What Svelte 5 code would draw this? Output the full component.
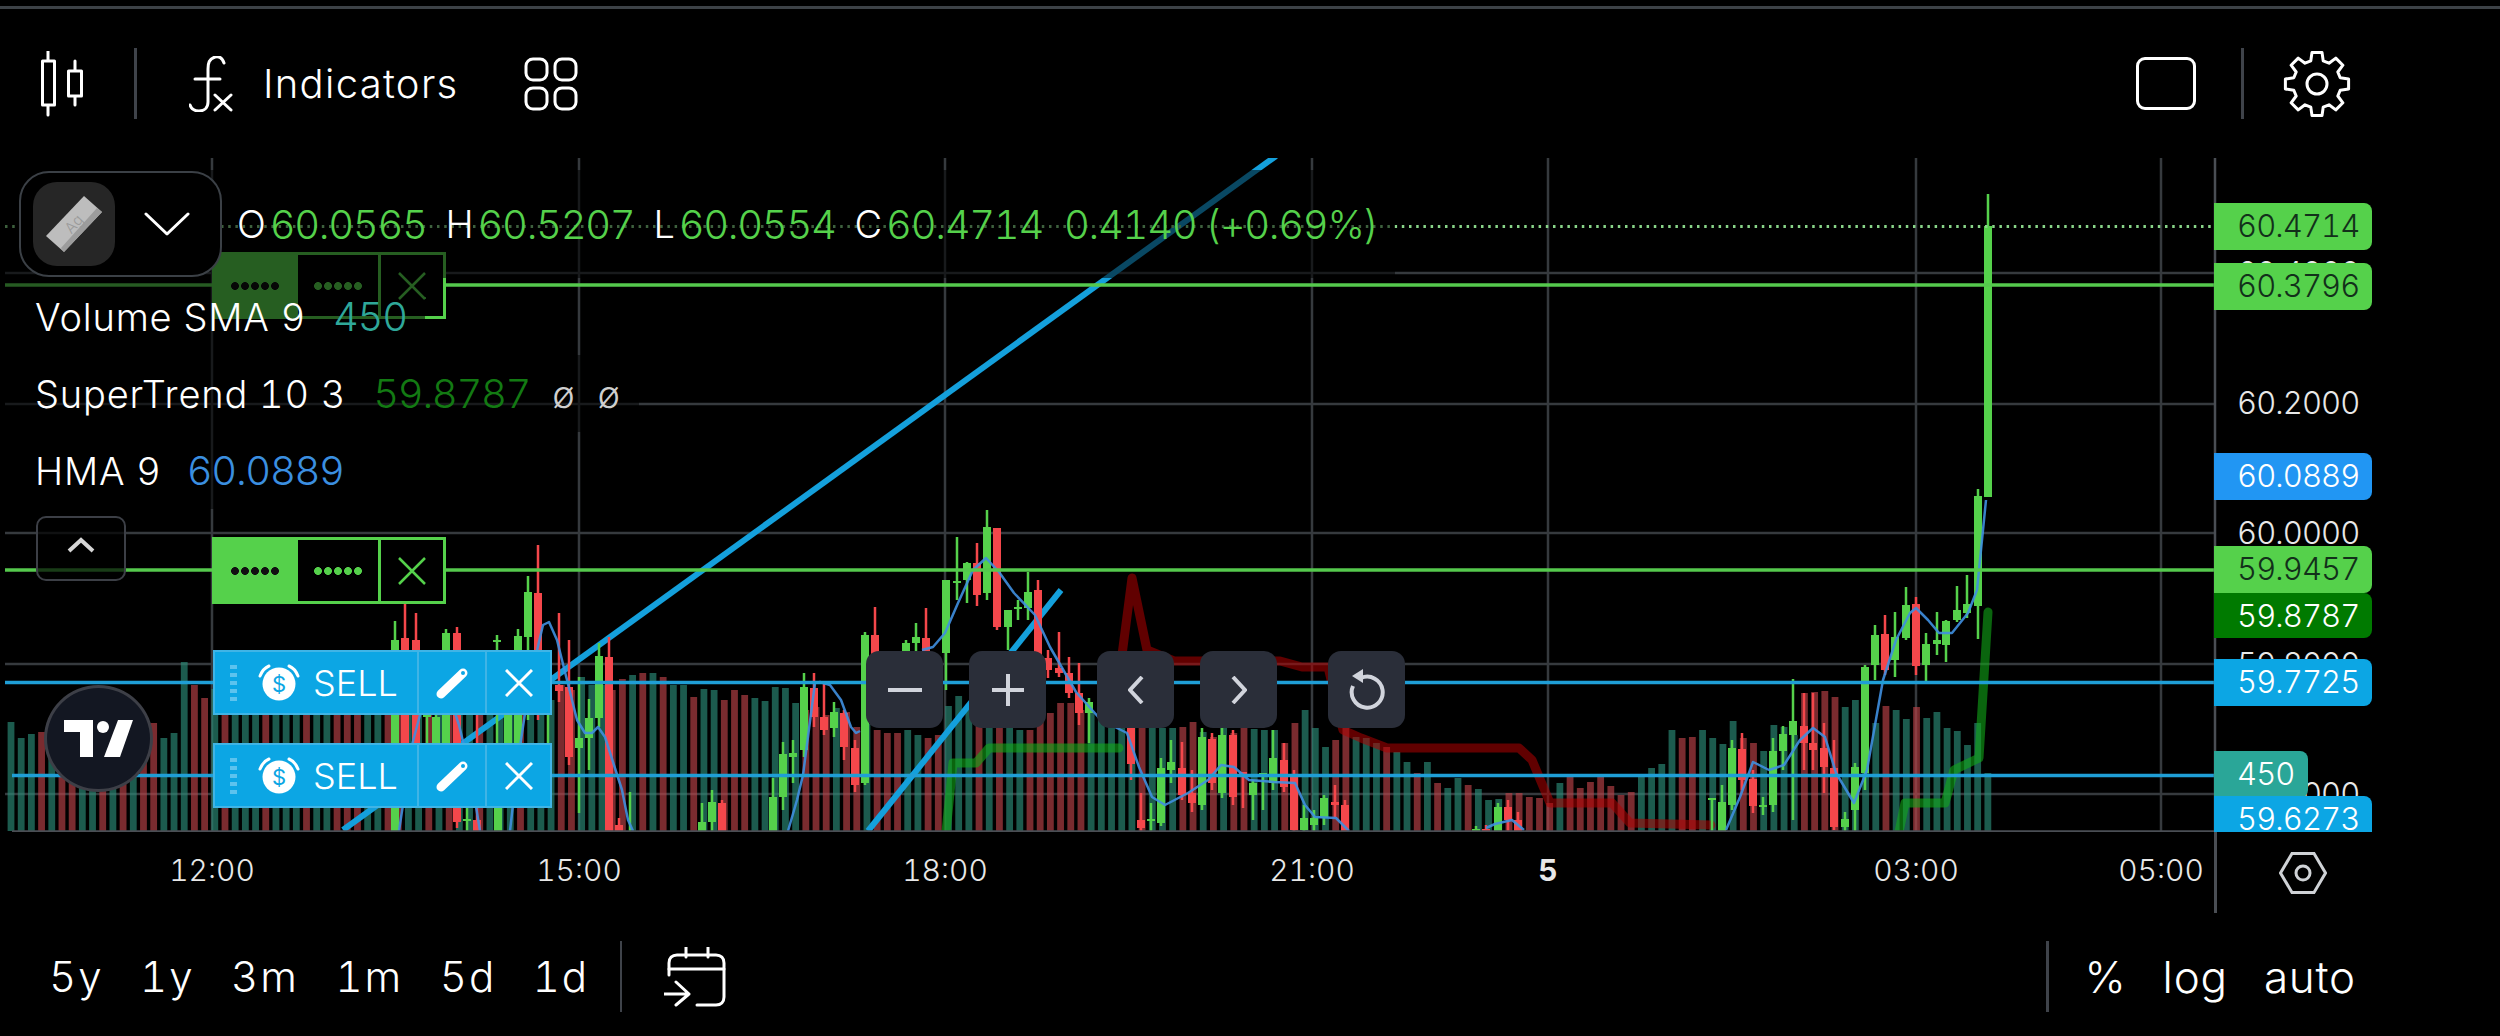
<script>
  // all chart coordinates are page pixels, the svg viewBox starts at y=158
  const gridX = [212, 579, 945, 1312, 1548, 1916, 2161];
  const gridY = [273, 404, 533, 664, 794];

  // volume bars left to right: bar top, negative means a red bar
  const volumes = [
    722, 738, 734, -732, 730, -725, -735, 722, 735, -735, 730, -720, 725, -730, -723, 738, 733, 662, -685, -698, 689,
    -700, 695, 700, 702, -690, 705, 695, 700, -695, 700, 698, -690, -705, -700, 695, 700, -700, -695, 690, 705,
    -700, 695, -692, 700, 690, -695, 700, 705, 695, -700, 698, 690, 700,
    -685, -690, 677, 685, 685, -690, -679, 675, -673, 673, -677, 685, 685, -697, 689, 690, -700, -690, -695, 698, 701, 687, 688, 703,
    -710, -707, -715, 708, -712, -727, 724, -730, -733, -733, 730, 735, -738, -735, 706, 696, 710, -713, 720, -720, 727, 730,
    -730, -717, -713, -703, -703, -710, 713, 720, 727, 727, 727, -723, 728, 728, 728, -727, -722, 732, -737, 728, -733, -728,
    729, 730, 730, -743, -723, 710, 728, 747, -740, -728, 737, 738, 743, -747, 752, 762, -773, 762, -783, 788, 778, -785,
    789, 800, 799, -793, -793, -797, -798, -803, 783, -777, -788, -782, -777, -786, -795, -792, 775, 768, 764, 730, -738, -737,
    730, 738, 744, 721, -738, -743, 751, 725, 727, 735, -693, -692, -691, -697, 707, 700, 715, 723, -706, 710, 719, -707,
    718, 712, 728, 731, 745, 723, 773,
  ];
  const bars = volumes.map((v, i) => ({ x: 11 + i * 10.19, top: Math.abs(v), red: v < 0 }));

  // candles: x, high, body top, body bottom, low, green?
  const candles = [
    [395, 621, 640, 831, 831, 1], [405, 603, 638, 743, 760, 0], [416, 613, 640, 743, 760, 0], [427, 690, 715, 715, 745, 1],
    [436, 690, 717, 745, 745, 1], [446, 629, 633, 745, 750, 1], [457, 627, 633, 822, 828, 0], [467, 800, 819, 821, 831, 1],
    [477, 700, 820, 831, 831, 0], [497, 635, 640, 640, 745, 1], [498, 808, 808, 831, 831, 1], [508, 690, 715, 745, 745, 1],
    [518, 629, 636, 745, 745, 1], [528, 576, 592, 637, 720, 1], [538, 545, 593, 650, 720, 0], [548, 700, 700, 700, 745, 1],
    [559, 613, 685, 691, 702, 0], [569, 640, 687, 757, 765, 0], [579, 677, 738, 748, 813, 1], [589, 699, 718, 738, 770, 1],
    [599, 643, 656, 718, 727, 1], [609, 637, 657, 831, 831, 0], [619, 818, 825, 831, 831, 0], [630, 792, 831, 831, 831, 1],
    [702, 803, 822, 831, 831, 1], [712, 790, 802, 822, 831, 1], [722, 800, 803, 831, 831, 0], [773, 778, 797, 831, 831, 1],
    [783, 742, 754, 797, 810, 1], [793, 740, 753, 757, 783, 1], [804, 673, 687, 750, 757, 1], [814, 673, 688, 717, 727, 0],
    [824, 683, 717, 730, 735, 0], [834, 702, 712, 728, 737, 1], [844, 710, 713, 747, 760, 0], [855, 740, 748, 785, 792, 0],
    [865, 632, 635, 783, 785, 1], [875, 607, 635, 665, 670, 0], [906, 640, 643, 651, 660, 1], [916, 623, 637, 643, 655, 1],
    [926, 608, 638, 651, 660, 0], [946, 580, 580, 653, 690, 1], [957, 537, 581, 583, 600, 1], [967, 562, 563, 580, 603, 1],
    [977, 543, 563, 595, 606, 0], [987, 510, 527, 593, 600, 1], [997, 528, 528, 627, 630, 0], [1008, 610, 610, 627, 650, 1],
    [1018, 600, 607, 609, 620, 1], [1028, 572, 592, 608, 620, 1], [1038, 580, 590, 660, 665, 0], [1048, 650, 658, 670, 678, 0],
    [1059, 632, 668, 673, 677, 0], [1069, 657, 673, 693, 698, 0], [1079, 663, 693, 713, 725, 0], [1089, 698, 702, 713, 743, 1],
    [1131, 725, 728, 764, 780, 0], [1141, 793, 820, 828, 831, 0], [1151, 803, 819, 821, 831, 1], [1161, 758, 768, 823, 826, 1],
    [1171, 740, 762, 770, 783, 1], [1182, 742, 768, 795, 800, 0], [1192, 770, 793, 803, 812, 0], [1202, 728, 737, 805, 810, 1],
    [1212, 733, 739, 783, 790, 0], [1222, 727, 735, 793, 798, 1], [1233, 730, 735, 797, 805, 0], [1243, 772, 772, 772, 808, 0],
    [1253, 780, 783, 795, 820, 1], [1263, 773, 773, 773, 810, 1], [1273, 730, 758, 783, 790, 1], [1284, 743, 760, 787, 792, 0],
    [1294, 770, 777, 830, 831, 0], [1304, 805, 818, 830, 831, 1], [1314, 810, 818, 825, 831, 1], [1324, 795, 798, 818, 825, 1],
    [1335, 785, 802, 805, 817, 0], [1345, 800, 805, 831, 831, 0], [1476, 826, 829, 831, 831, 1], [1486, 825, 829, 831, 831, 0],
    [1498, 803, 807, 831, 831, 1], [1508, 800, 807, 820, 831, 0], [1518, 812, 820, 831, 831, 0], [1712, 798, 798, 798, 831, 1],
    [1722, 785, 802, 831, 831, 1], [1732, 740, 748, 805, 810, 1], [1742, 733, 749, 780, 790, 0], [1753, 770, 779, 806, 813, 0],
    [1763, 797, 805, 807, 815, 1], [1773, 738, 751, 805, 812, 1], [1783, 726, 734, 751, 770, 1], [1793, 679, 721, 735, 820, 1],
    [1804, 693, 726, 743, 770, 0], [1813, 693, 743, 750, 770, 0], [1824, 723, 748, 767, 793, 0], [1834, 740, 768, 827, 830, 0],
    [1845, 812, 819, 827, 831, 1], [1855, 763, 767, 810, 831, 1], [1865, 665, 667, 773, 790, 1], [1875, 625, 635, 665, 680, 1],
    [1885, 615, 634, 670, 675, 0], [1895, 612, 637, 660, 677, 1], [1906, 587, 605, 638, 640, 1], [1916, 597, 604, 666, 675, 0],
    [1926, 633, 644, 665, 682, 1], [1937, 612, 640, 644, 655, 1], [1946, 620, 621, 645, 662, 1], [1957, 586, 610, 620, 622, 1],
    [1967, 575, 604, 613, 618, 1], [1978, 489, 496, 606, 639, 1], [1988, 194, 226, 497, 497, 1],
  ];

  const hma = [
    "399,831 412,745 424,700 436,682 449,695 459,725 470,770 480,831",
    "510,831 518,760 530,680 543,625 549,622 557,640 567,680 577,720 585,733 592,733 598,727 605,737 613,762 622,790 628,820 633,831",
    "788,831 797,800 803,775 815,683 820,682 830,685 841,700 851,727 856,733 860,731",
    "922,650 933,647 945,633 958,603 973,570 986,558 999,572 1014,593 1035,615 1050,647 1076,692 1101,720 1127,733 1139,767 1152,797 1165,805 1188,793 1208,780 1221,765 1234,767 1249,780 1274,782 1295,783 1305,805 1315,817 1336,818 1349,831",
    "1486,828 1495,824 1512,820 1524,830",
    "1726,830 1740,797 1753,762 1769,770 1784,765 1800,740 1813,728 1825,737 1836,773 1854,803 1867,770 1883,680 1896,640 1910,613 1916,608 1928,620 1939,633 1952,633 1968,613 1977,590 1986,500",
  ];

  const priceTicks = [
    { y: 273, t: "60.4000" },
    { y: 403, t: "60.2000" },
    { y: 533, t: "60.0000" },
    { y: 664, t: "59.8000" },
    { y: 794, t: "59.6000" },
  ];
  const priceTags = [
    { top: 203, t: "60.4714", c: "green" },
    { top: 263, t: "60.3796", c: "green" },
    { top: 453, t: "60.0889", c: "blue" },
    { top: 593, t: "59.8787", c: "trend" },
    { top: 546, t: "59.9457", c: "green" },
    { top: 659, t: "59.7725", c: "sky" },
    { top: 751, t: "450", c: "vol" },
    { top: 796, t: "59.6273", c: "sky" },
  ];

  const times = [
    { x: 212, t: "12:00" },
    { x: 579, t: "15:00" },
    { x: 945, t: "18:00" },
    { x: 1312, t: "21:00" },
    { x: 1548, t: "5", bold: true },
    { x: 1916, t: "03:00" },
    { x: 2161, t: "05:00" },
  ];
  const ranges = ["5y", "1y", "3m", "1m", "5d", "1d"];

  function gearPath(cx, cy, outer, root) {
    const pts = [];
    for (let i = 0; i < 8; i++) {
      const a = -90 + i * 45;
      for (const [d, r] of [[-15, root], [-9, outer], [9, outer], [15, root]]) {
        const rad = ((a + d) * Math.PI) / 180;
        pts.push((cx + r * Math.cos(rad)).toFixed(1) + " " + (cy + r * Math.sin(rad)).toFixed(1));
      }
    }
    return "M" + pts.join("L") + "Z";
  }
</script>

<main class="page">
  <div class="top-rule"></div>

  <header class="toolbar">
    <svg class="ico candles-ico" viewBox="0 0 44 66" width="44" height="66">
      <path d="M7 0V10M7 54V64M34 10V54" />
      <rect x="1.5" y="10" width="12" height="44" fill="#000" />
      <rect x="27.5" y="20" width="13" height="25" fill="#000" />
    </svg>
    <span class="tb-divider"></span>
    <svg class="ico fx-ico" viewBox="0 0 44 56" width="44" height="56">
      <path d="M35 7C33 1 29 0 26 1C20 3 19 7 19 13V46C19 52 15 55 10 55C5 55 2 52 1 49" />
      <path d="M6 23H31" />
      <path d="M26 39L42 54M42 39L26 54" />
    </svg>
    <span class="tb-label">Indicators</span>
    <svg class="ico grid-ico" viewBox="0 0 54 54" width="54" height="54">
      <rect x="2" y="2" width="21" height="21" rx="7" />
      <rect x="31" y="2" width="21" height="21" rx="7" />
      <rect x="2" y="31" width="21" height="21" rx="7" />
      <rect x="31" y="31" width="21" height="21" rx="7" />
    </svg>
    <span class="spacer"></span>
    <span class="square-btn"></span>
    <span class="tb-divider right-divider"></span>
    <svg class="ico gear-ico" viewBox="0 0 68 68" width="68" height="68">
      <path d={gearPath(34, 34, 32, 24)} />
      <circle cx="34" cy="34" r="10" />
    </svg>
  </header>

  <section class="chart">
    <svg class="plot" viewBox="0 158 2500 674" width="2500" height="674">
      {#each gridX as x}
        <line class="grid" x1={x} x2={x} y1="158" y2="832" />
      {/each}
      {#each gridY as y}
        <line class="grid" x1="5" x2="2215" y1={y} y2={y} />
      {/each}

      {#each bars as b}
        <rect class={b.red ? "vol-red" : "vol-green"} x={b.x - 3.4} y={b.top} width="6.8" height={831 - b.top} />
      {/each}

      <polyline class="trend-red" points="1122,655 1132,578 1147,650 1174,661 1280,661 1302,667 1328,667 1343,730 1361,738 1387,748 1519,748 1532,760 1550,803 1612,803 1630,823 1711,825" />
      <polyline class="trend-green" points="946,832 953,763 976,763 989,748 1119,748" />
      <polyline class="trend-green" points="1899,832 1905,803 1945,803 1954,770 1979,758 1988,612" />

      <line class="thick-blue" x1="343" y1="830" x2="1276" y2="156" />
      <line class="thick-blue" x1="868" y1="831" x2="1061" y2="590" />

      {#each candles as [x, hi, top, bot, lo, up]}
        <line class={up ? "wick-up" : "wick-down"} x1={x} x2={x} y1={hi} y2={lo} />
        <rect class={up ? "body-up" : "body-down"} x={x - 4} y={top} width="8" height={Math.max(bot - top, 2)} />
      {/each}

      {#each hma as pts}
        <polyline class="hma" points={pts} />
      {/each}

      <line class="last-price" x1="5" x2="2215" y1="226.5" y2="226.5" />
      <line class="green-level" x1="5" x2="2215" y1="285" y2="285" />
      <line class="green-level" x1="5" x2="2215" y1="570" y2="570" />
      <line class="blue-level" x1="5" x2="2215" y1="682.5" y2="682.5" />
      <line class="blue-level" x1="12" x2="2215" y1="775.5" y2="775.5" />
      <line class="axis" x1="2215" x2="2215" y1="158" y2="832" />
      <line class="axis" x1="12" x2="2215" y1="831.5" y2="831.5" />
    </svg>

    <div class="price-axis">
      {#each priceTicks as p}
        <span class="tick" style="top:{p.y - 158}px">{p.t}</span>
      {/each}
      {#each priceTags as p}
        <span class="price-tag {p.c}" style="top:{p.top - 158}px">{p.t}</span>
      {/each}
    </div>

    <div class="level-tag dim">
      <span class="lt-cell filled"><i class="dots dark"></i></span>
      <span class="lt-cell"><i class="dots"></i></span>
      <span class="lt-cell close">
        <svg viewBox="0 0 28 28" width="28" height="28"><path d="M1 1L27 27M27 1L1 27" /></svg>
      </span>
    </div>
    <div class="level-tag second">
      <span class="lt-cell filled"><i class="dots dark"></i></span>
      <span class="lt-cell"><i class="dots"></i></span>
      <span class="lt-cell close">
        <svg viewBox="0 0 28 28" width="28" height="28"><path d="M1 1L27 27M27 1L1 27" /></svg>
      </span>
    </div>

    {#each ["first", "next"] as pos}
      <div class="order-tag {pos}">
        <span class="ot-main">
          <i class="grip"></i>
          <svg class="alarm" viewBox="0 0 44 40" width="44" height="40">
            <path class="bell" d="M3 13C5 8 7 5 12 3M41 13C39 8 37 5 32 3" />
            <circle cx="22" cy="21" r="16.5" fill="#fff" />
            <text x="22" y="29" text-anchor="middle">$</text>
          </svg>
          <span class="ot-label">SELL</span>
        </span>
        <span class="ot-cell pencil">
          <svg viewBox="0 0 32 32" width="32" height="32">
            <path class="pen" d="M5 27L27 6" />
            <circle cx="27" cy="6" r="2" fill="#0ca6e4" />
          </svg>
        </span>
        <span class="ot-cell cross">
          <svg viewBox="0 0 28 28" width="28" height="28"><path d="M1 1L27 27M27 1L1 27" /></svg>
        </span>
      </div>
    {/each}

    <div class="legend">
      <div class="lg-row ohlc">
        <b>O</b><em>60.0565</em><b class="next">H</b><em>60.5207</em><b class="next">L</b><em>60.0554</em><b class="next">C</b><em>60.4714</em>
        <em class="next">0.4140</em><em class="change">(+0.69%)</em>
      </div>
      <div class="lg-row"><span>Volume SMA 9</span><em class="teal">450</em></div>
      <div class="lg-row">
        <span>SuperTrend 10 3</span><em class="darkgreen">59.8787</em><span class="nil">ø</span><span class="nil">ø</span>
      </div>
      <div class="lg-row"><span>HMA 9</span><em class="hma-val">60.0889</em></div>
    </div>

    <div class="symbol-box">
      <span class="symbol-tile">
        <svg viewBox="0 0 60 60" width="60" height="60">
          <polygon points="40,2 58,18 20,58 2,42" fill="#bdbdbd" />
          <polygon points="58,18 20,58 17,54 53,14" fill="#9c9c9c" />
          <text x="30" y="35" text-anchor="middle" transform="rotate(-47 30 30)">Ag</text>
        </svg>
      </span>
      <svg class="ico" viewBox="0 0 46 24" width="46" height="24"><path d="M2 2L23 22L44 2" /></svg>
    </div>

    <button class="collapse">
      <svg viewBox="0 0 30 16" width="30" height="16"><path d="M3 14L15 3L27 14" /></svg>
    </button>

    <div class="tv-logo">
      <svg viewBox="0 0 70 38" width="70" height="38">
        <path d="M0 0H29V37H16V12H0Z" fill="#fff" />
        <circle cx="39" cy="7" r="6" fill="#fff" />
        <path d="M54 0H69L56 37H40Z" fill="#fff" />
      </svg>
    </div>

    <div class="chart-nav">
      <button>
        <svg viewBox="0 0 34 6" width="34" height="6"><path d="M0 3H34" /></svg>
      </button>
      <button>
        <svg viewBox="0 0 32 32" width="32" height="32"><path d="M0 16H32M16 0V32" /></svg>
      </button>
      <button class="far">
        <svg viewBox="0 0 16 28" width="16" height="28"><path d="M14 1L2 14L14 27" /></svg>
      </button>
      <button>
        <svg viewBox="0 0 16 28" width="16" height="28"><path d="M2 1L14 14L2 27" /></svg>
      </button>
      <button class="far">
        <svg viewBox="0 0 36 42" width="36" height="42">
          <path d="M12 9A15.5 15.5 0 1 1 4 17" />
          <path class="arrow" d="M14 0L3 7L14 14Z" />
        </svg>
      </button>
    </div>
  </section>

  <div class="time-axis">
    <div class="time-labels">
      {#each times as t}
        <span class:bold={t.bold} style="left:{t.x}px">{t.t}</span>
      {/each}
    </div>
    <svg class="hex" viewBox="0 0 48 42" width="48" height="42">
      <path d="M1.5 21L13 1.5H35L46.5 21L35 40.5H13Z" />
      <circle cx="24" cy="21" r="7" />
    </svg>
  </div>

  <footer class="bottom">
    <div class="ranges">
      {#each ranges as r}
        <span>{r}</span>
      {/each}
    </div>
    <span class="tb-divider thin"></span>
    <svg class="ico calendar" viewBox="0 0 62 60" width="62" height="60">
      <path d="M22 0V10M44 0V10" />
      <path d="M5 28V16C5 11 8 8 13 8H52C57 8 60 11 60 16V50C60 55 57 58 52 58H33" />
      <path d="M5 22H60" />
      <path d="M0 47H25M12 35L25 47L12 58" />
    </svg>
    <span class="spacer"></span>
    <span class="tb-divider wide"></span>
    <span class="opt">%</span>
    <span class="opt">log</span>
    <span class="opt">auto</span>
  </footer>
</main>

<style>
  :global(body) {
    background: #000;
  }

  .page {
    width: 2500px;
    height: 1036px;
    overflow: hidden;
    background: #000;
    color: #fff;
    font-family: Inter, "Liberation Sans", sans-serif;
    font-weight: 300;
    font-variant-numeric: tabular-nums;
  }

  .top-rule {
    height: 3px;
    margin-top: 6px;
    background: #3d4247;
  }

  .toolbar {
    height: 149px;
    display: flex;
    align-items: center;
    padding: 0 0 0 41px;
    box-sizing: border-box;
  }

  .ico {
    fill: none;
    stroke: #fff;
    stroke-width: 3;
    stroke-linecap: round;
    stroke-linejoin: round;
    flex: none;
  }

  .tb-divider {
    width: 3px;
    height: 71px;
    background: #3f434a;
    flex: none;
  }

  .candles-ico { margin-right: 49px; }
  .fx-ico { margin-left: 52px; margin-top: 0; }

  .tb-label {
    font-size: 40px;
    letter-spacing: 1.3px;
    margin-left: 30px;
  }

  .grid-ico { margin-left: 65px; margin-top: 1px; }

  .spacer { flex: 1; }

  .square-btn {
    width: 54px;
    height: 47px;
    border: 3px solid #fff;
    border-radius: 9px;
  }

  .right-divider { margin-left: 45px; }

  .gear-ico {
    margin-left: 39px;
    margin-right: 149px;
  }

  /* chart */
  .chart {
    position: relative;
    height: 674px;
    overflow: hidden;
  }

  .plot { display: block; }

  .grid {
    stroke: #363a3e;
    stroke-width: 2.5;
  }

  .axis {
    stroke: #4a4e54;
    stroke-width: 2.5;
  }

  .vol-green { fill: #2b8c78; opacity: 0.65; }
  .vol-red { fill: #bc4248; opacity: 0.65; }

  .trend-red,
  .trend-green {
    fill: none;
    stroke-width: 9;
    stroke-linejoin: round;
    stroke-linecap: round;
  }
  .trend-red { stroke: #b00000; opacity: 0.55; }
  .trend-green { stroke: #10a818; opacity: 0.6; }

  .thick-blue {
    stroke: #14a0dc;
    stroke-width: 6;
  }

  .wick-up { stroke: #55d14b; stroke-width: 2.5; }
  .wick-down { stroke: #f4474b; stroke-width: 2.5; }
  .body-up { fill: #55d14b; }
  .body-down { fill: #f4474b; }

  .hma {
    fill: none;
    stroke: #3f8fe0;
    stroke-width: 2.5;
    stroke-linejoin: round;
    opacity: 0.9;
  }

  .last-price {
    stroke: #88d488;
    stroke-width: 3;
    stroke-dasharray: 2.5 4.7;
  }

  .green-level { stroke: #55c94d; stroke-width: 3.5; }
  .blue-level { stroke: #1f9ed6; stroke-width: 3.5; }

  .price-axis {
    position: absolute;
    inset: 0;
    font-size: 31px;
    letter-spacing: -0.9px;
  }

  .tick {
    position: absolute;
    left: 2237px;
    line-height: 40px;
    margin-top: -20px;
    color: #e8e8e8;
  }

  .price-tag {
    position: absolute;
    left: 2214px;
    width: 158px;
    height: 47px;
    line-height: 46px;
    box-sizing: border-box;
    padding-left: 23px;
    border-radius: 0 8px 8px 0;
  }

  .price-tag.green { background: #55d14b; color: #12301a; }
  .price-tag.blue { background: #2196f3; }
  .price-tag.trend { background: #007a00; height: 45px; }
  .price-tag.sky { background: #0ca6e4; }
  .price-tag.vol { background: #2aa698; width: 94px; }

  .level-tag {
    position: absolute;
    left: 212px;
    width: 234px;
    height: 67px;
    display: flex;
    box-sizing: border-box;
    border: 3px solid #55d14b;
    background: #000;
  }
  .level-tag.dim { top: 94px; }
  .level-tag.second { top: 379px; }

  .lt-cell {
    display: flex;
    align-items: center;
    justify-content: center;
    width: 83px;
    border-right: 3px solid #55d14b;
    box-sizing: border-box;
  }
  .lt-cell.filled {
    width: 83px;
    background: #55d14b;
  }
  .lt-cell.close {
    flex: 1;
    border: none;
  }
  .lt-cell svg {
    fill: none;
    stroke: #55d14b;
    stroke-width: 2.5;
  }

  .dots {
    width: 50px;
    height: 12px;
    background: radial-gradient(circle, #55d14b 3.6px, transparent 4.2px) 0 0 / 10px 12px repeat-x;
  }
  .dots.dark {
    background-image: radial-gradient(circle, #111 3.6px, transparent 4.2px);
  }

  .order-tag {
    position: absolute;
    left: 213px;
    width: 339px;
    height: 65px;
    display: flex;
    box-sizing: border-box;
    border: 2px solid #3fb4e6;
    background: #0ca6e4;
  }
  .order-tag.first { top: 492px; }
  .order-tag.next { top: 585px; }

  .ot-main {
    width: 204px;
    display: flex;
    align-items: center;
    box-sizing: border-box;
    padding-left: 15px;
    border-right: 2px solid #3fb4e6;
    position: relative;
  }

  .grip {
    width: 7px;
    height: 36px;
    background: repeating-linear-gradient(#5cc3ee 0 4px, transparent 4px 8px);
  }

  .alarm { margin-left: 20px; }
  .alarm text {
    fill: #0ca6e4;
    font-size: 22px;
    font-family: Inter, "Liberation Sans", sans-serif;
    font-weight: 400;
  }
  .bell {
    fill: none;
    stroke: #fff;
    stroke-width: 3;
    stroke-linecap: round;
  }

  .ot-label {
    margin-left: 12px;
    font-size: 36px;
  }

  .ot-cell {
    display: flex;
    align-items: center;
    justify-content: center;
  }
  .pencil {
    width: 68px;
    border-right: 2px solid #3fb4e6;
    box-sizing: border-box;
  }
  .cross { flex: 1; }
  .cross svg {
    fill: none;
    stroke: #fff;
    stroke-width: 3;
  }
  .pen {
    fill: none;
    stroke: #fff;
    stroke-width: 9;
    stroke-linecap: round;
  }

  .legend {
    position: absolute;
    left: 5px;
    top: 12px;
    display: flex;
    flex-direction: column;
    align-items: flex-start;
    font-size: 38px;
    letter-spacing: 0.8px;
    color: #fff;
  }

  .lg-row {
    height: 77px;
    display: flex;
    align-items: center;
    padding: 0 18px 0 30px;
    background: rgba(0, 0, 0, 0.55);
    white-space: nowrap;
  }
  .lg-row em {
    font-style: normal;
    font-size: 40px;
    letter-spacing: -1.3px;
    margin-left: 27px;
  }
  .lg-row em.hma-val { margin-left: 25px; }
  .lg-row.ohlc {
    height: 108px;
    width: 1390px;
    box-sizing: border-box;
    padding-left: 232px;
    color: #55d14b;
  }
  .ohlc b {
    font-weight: 300;
    color: #fff;
    margin-right: 3px;
  }
  .ohlc b.next { margin-left: 19px; }
  .ohlc em { margin-left: 0; }
  .ohlc em.next { margin-left: 21px; }
  .ohlc em.change { margin-left: 9px; }

  .teal { color: #2fa89a; }
  .darkgreen { color: #137a13; }
  .hma-val { color: #3b8fe0; }
  .nil { margin-left: 22px; color: #cfcfcf; }

  .symbol-box {
    position: absolute;
    left: 19px;
    top: 13px;
    width: 203px;
    height: 106px;
    box-sizing: border-box;
    border: 2.5px solid #3b4046;
    border-radius: 30px;
    background: #000;
    display: flex;
    align-items: center;
    gap: 29px;
    padding-left: 12px;
  }

  .symbol-tile {
    width: 82px;
    height: 84px;
    flex: none;
    border-radius: 24px;
    background: #262626;
    display: flex;
    align-items: center;
    justify-content: center;
  }
  .symbol-tile text {
    fill: #9a9a9a;
    font-size: 15px;
    font-family: Inter, "Liberation Sans", sans-serif;
  }

  .collapse {
    position: absolute;
    left: 36px;
    top: 358px;
    width: 90px;
    height: 65px;
    padding: 0;
    display: flex;
    align-items: center;
    justify-content: center;
    background: rgba(0, 0, 0, 0.7);
    border: 2.5px solid #3c3f46;
    border-radius: 10px;
  }
  .collapse svg {
    fill: none;
    stroke: #d6d6d6;
    stroke-width: 4;
    margin-top: -8px;
  }

  .tv-logo {
    position: absolute;
    left: 44px;
    top: 527px;
    width: 109px;
    height: 107px;
    box-sizing: border-box;
    border: 3px solid #3d3f47;
    border-radius: 50%;
    background: #131722;
    display: flex;
    align-items: center;
    justify-content: center;
  }

  .chart-nav {
    position: absolute;
    left: 866px;
    top: 493px;
    display: flex;
    gap: 26px;
  }
  .chart-nav button {
    width: 77px;
    height: 77px;
    padding: 0;
    border: none;
    border-radius: 13px;
    background: #2a2e39;
    display: flex;
    align-items: center;
    justify-content: center;
  }
  .chart-nav button.far { margin-left: 25px; }
  .chart-nav svg {
    fill: none;
    stroke: #d1d4dc;
    stroke-width: 4;
  }
  .chart-nav .arrow {
    fill: #d1d4dc;
    stroke: none;
  }

  /* axis under the chart */
  .time-axis {
    height: 81px;
    display: flex;
    align-items: center;
  }

  .time-labels {
    position: relative;
    width: 2217px;
    height: 100%;
    flex: none;
    box-sizing: border-box;
    border-right: 3px solid #4a4e54;
    font-size: 30px;
    color: #e8e8e8;
  }
  .time-labels span {
    position: absolute;
    top: 20px;
    transform: translateX(-50%);
  }
  .time-labels .bold {
    font-weight: 700;
  }

  .hex {
    margin-left: 62px;
    fill: none;
    stroke: #cfd2d6;
    stroke-width: 3;
  }

  .bottom {
    height: 123px;
    display: flex;
    align-items: center;
    padding: 0 144px 0 49px;
    box-sizing: border-box;
    font-size: 40px;
    margin-top: 2px;
  }

  .ranges {
    display: flex;
    gap: 36.5px;
    font-size: 42px;
    letter-spacing: 2px;
  }

  .tb-divider.thin {
    width: 2px;
    margin-left: 31px;
    background: #3f434a;
  }
  .tb-divider.wide {
    margin-right: 36px;
  }

  .calendar { margin-left: 42px; }

  .opt {
    margin-left: 36px;
    font-size: 44px;
    letter-spacing: 0.8px;
  }
  .tb-divider.wide + .opt { margin-left: 0; }
</style>
